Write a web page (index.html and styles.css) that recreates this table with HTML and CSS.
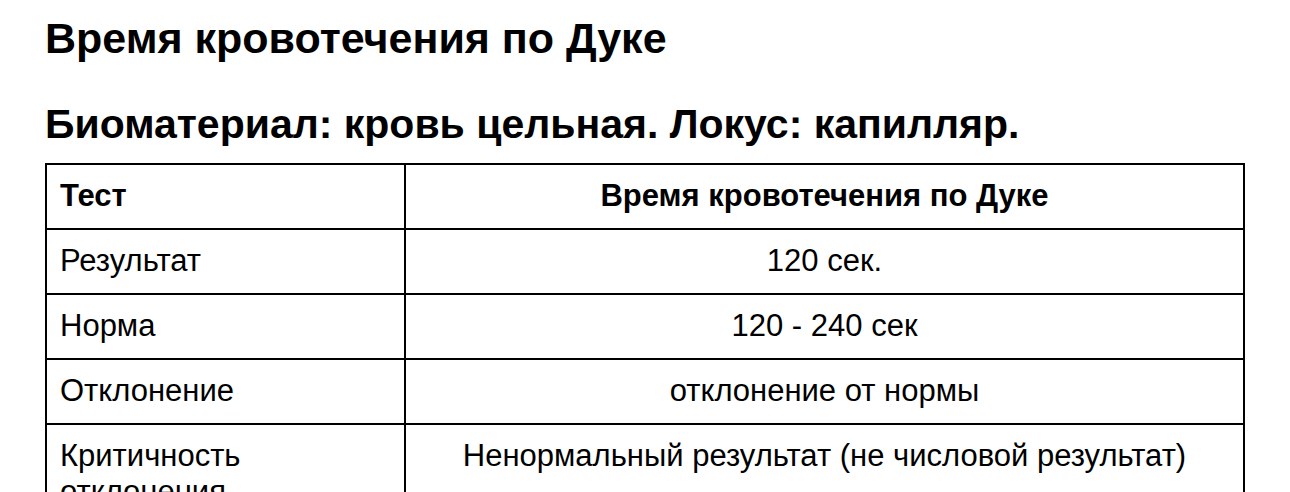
FILE: index.html
```html
<!DOCTYPE html>
<html lang="ru">
<head>
<meta charset="utf-8">
<title>Время кровотечения по Дуке</title>
<link rel="stylesheet" href="styles.css">
</head>
<body>
<main class="page">
  <h1 class="title">Время кровотечения по Дуке</h1>
  <h2 class="subtitle">Биоматериал: кровь цельная. Локус: капилляр.</h2>
  <table class="results">
    <colgroup>
      <col class="col-label">
      <col class="col-value">
    </colgroup>
    <thead>
      <tr>
        <th class="label">Тест</th>
        <th class="value">Время кровотечения по Дуке</th>
      </tr>
    </thead>
    <tbody>
      <tr>
        <td class="label">Результат</td>
        <td class="value">120 сек.</td>
      </tr>
      <tr>
        <td class="label">Норма</td>
        <td class="value">120 - 240 сек</td>
      </tr>
      <tr>
        <td class="label">Отклонение</td>
        <td class="value">отклонение от нормы</td>
      </tr>
      <tr>
        <td class="label">Критичность отклонения</td>
        <td class="value">Ненормальный результат (не числовой результат)</td>
      </tr>
    </tbody>
  </table>
</main>
</body>
</html>
```

FILE: styles.css
```css
html, body {
  margin: 0;
  padding: 0;
  background: #ffffff;
}

body {
  font-family: "Liberation Sans", Arial, sans-serif;
  color: #000000;
}

.page {
  padding: 0 45px 0 45px;
  width: 1200px;
}

.title {
  font-size: 43px;
  font-weight: bold;
  line-height: 50px;
  margin: 13px 0 0 0;
}

.subtitle {
  font-size: 41px;
  font-weight: bold;
  line-height: 47px;
  margin: 38px 0 0 0;
}

.results {
  border-collapse: collapse;
  width: 1200px;
  margin-top: 15px;
  font-size: 31px;
  line-height: 36px;
}

.col-label {
  width: 359px;
}

.results th,
.results td {
  border: 2px solid #000000;
  padding: 13px 13px 14px 13px;
  vertical-align: top;
}

.results th {
  font-weight: bold;
}

.results .label {
  text-align: left;
}

.results .value {
  text-align: center;
}
```
